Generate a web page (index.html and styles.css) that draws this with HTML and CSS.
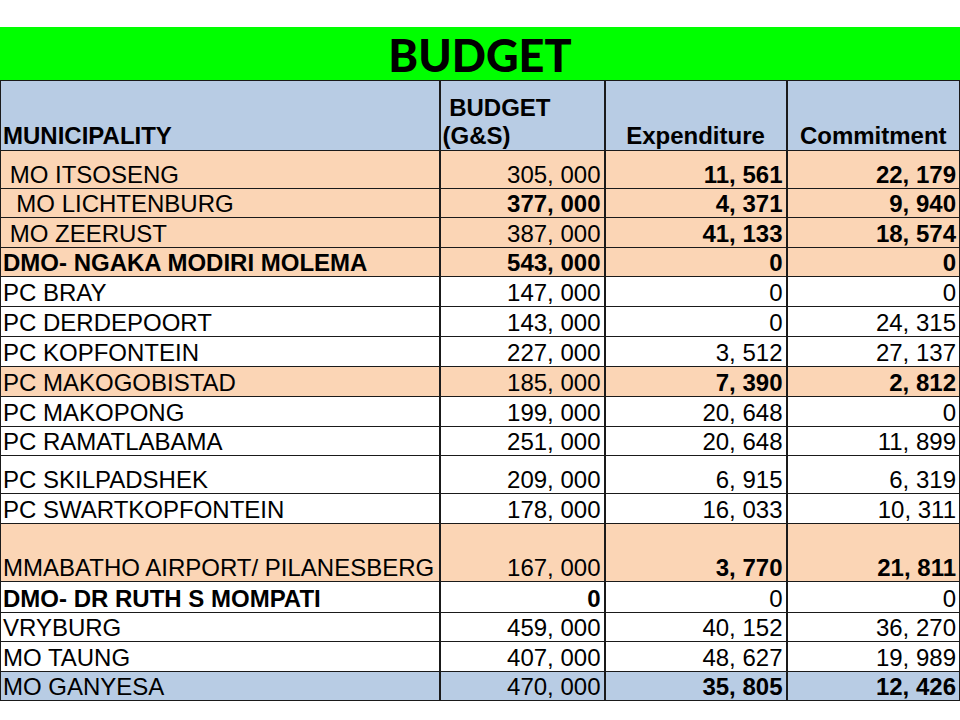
FILE: index.html
```html
<!DOCTYPE html>
<html>
<head>
<meta charset="utf-8">
<link rel="stylesheet" href="styles.css">
</head>
<body>
<div class="page">
  <div class="title">BUDGET</div>
  <table class="budget">
    <colgroup>
      <col class="c1"><col class="c2"><col class="c3"><col class="c4">
    </colgroup>
    <thead>
      <tr class="head">
        <th class="left">MUNICIPALITY</th>
        <th class="left">&nbsp;BUDGET<br>(G&amp;S)</th>
        <th>Expenditure</th>
        <th>Commitment</th>
      </tr>
    </thead>
    <tbody>
      <tr class="orange h38"><td>&nbsp;MO ITSOSENG</td><td class="num">305, 000</td><td class="num b">11, 561</td><td class="num b">22, 179</td></tr>
      <tr class="orange h29"><td>&nbsp;&nbsp;MO LICHTENBURG</td><td class="num b">377, 000</td><td class="num b">4, 371</td><td class="num b">9, 940</td></tr>
      <tr class="orange h30"><td>&nbsp;MO ZEERUST</td><td class="num">387, 000</td><td class="num b">41, 133</td><td class="num b">18, 574</td></tr>
      <tr class="orange h29"><td class="b">DMO- NGAKA MODIRI MOLEMA</td><td class="num b">543, 000</td><td class="num b">0</td><td class="num b">0</td></tr>
      <tr class="h30 grey"><td>PC BRAY</td><td class="num">147, 000</td><td class="num">0</td><td class="num">0</td></tr>
      <tr class="h30 grey"><td>PC DERDEPOORT</td><td class="num">143, 000</td><td class="num">0</td><td class="num">24, 315</td></tr>
      <tr class="h30 grey"><td>PC KOPFONTEIN</td><td class="num">227, 000</td><td class="num">3, 512</td><td class="num">27, 137</td></tr>
      <tr class="orange h30"><td>PC MAKOGOBISTAD</td><td class="num">185, 000</td><td class="num b">7, 390</td><td class="num b">2, 812</td></tr>
      <tr class="h30 grey"><td>PC MAKOPONG</td><td class="num">199, 000</td><td class="num">20, 648</td><td class="num">0</td></tr>
      <tr class="h29 grey"><td>PC RAMATLABAMA</td><td class="num">251, 000</td><td class="num">20, 648</td><td class="num">11, 899</td></tr>
      <tr class="h38"><td>PC SKILPADSHEK</td><td class="num">209, 000</td><td class="num">6, 915</td><td class="num">6, 319</td></tr>
      <tr class="h30"><td>PC SWARTKOPFONTEIN</td><td class="num">178, 000</td><td class="num">16, 033</td><td class="num">10, 311</td></tr>
      <tr class="orange h58"><td>MMABATHO AIRPORT/ PILANESBERG</td><td class="num">167, 000</td><td class="num b">3, 770</td><td class="num b">21, 811</td></tr>
      <tr class="h31"><td class="b">DMO- DR RUTH S MOMPATI</td><td class="num b">0</td><td class="num">0</td><td class="num">0</td></tr>
      <tr class="h29"><td>VRYBURG</td><td class="num">459, 000</td><td class="num">40, 152</td><td class="num">36, 270</td></tr>
      <tr class="h30 grey"><td>MO TAUNG</td><td class="num">407, 000</td><td class="num">48, 627</td><td class="num">19, 989</td></tr>
      <tr class="blue h29 grey"><td>MO GANYESA</td><td class="num">470, 000</td><td class="num b">35, 805</td><td class="num b">12, 426</td></tr>
    </tbody>
  </table>
</div>
</body>
</html>
```

FILE: styles.css
```css
html, body {
  margin: 0;
  padding: 0;
  background: #ffffff;
}

.page {
  width: 960px;
  padding-top: 27px;
}

.title {
  height: 53px;
  box-sizing: border-box;
  padding-top: 3px;
  background: #00ff00;
  color: #000;
  font-family: Lato, "Open Sans", sans-serif;
  font-weight: 900;
  font-size: 45px;
  line-height: 50px;
  text-align: center;
}

.budget {
  width: 959px;
  border-collapse: collapse;
  table-layout: fixed;
  font-family: "Liberation Sans", Arial, sans-serif;
  font-size: 24px;
  color: #000;
}

.c1 { width: 439px; }
.c2 { width: 165px; }
.c3 { width: 182px; }
.c4 { width: 173px; }

.budget th,
.budget td {
  border: 1px solid #1a1a1a;
  padding: 0 2px;
  vertical-align: bottom;
  white-space: nowrap;
  overflow: hidden;
  line-height: 27px;
}

.budget tr > :first-child,
.budget tr > :nth-child(2),
.budget tr > :nth-child(3) {
  border-right: 2px solid #1a1a1a;
}

.head {
  height: 70px;
  background: #b8cce4;
}

.head th {
  font-weight: 700;
  text-align: center;
  line-height: 28px;
}

.head th.left {
  text-align: left;
}

.budget td.num {
  text-align: right;
  padding-right: 3px;
}

.b {
  font-weight: 700;
}

.orange { background: #fbd5b5; }
.blue { background: #b8cce4; }

.grey td {
  border-top-color: #7a7a7a;
}

.h29 { height: 29px; }
.h30 { height: 30px; }
.h31 { height: 31px; }
.h38 { height: 38px; }
.h58 { height: 58px; }
```
